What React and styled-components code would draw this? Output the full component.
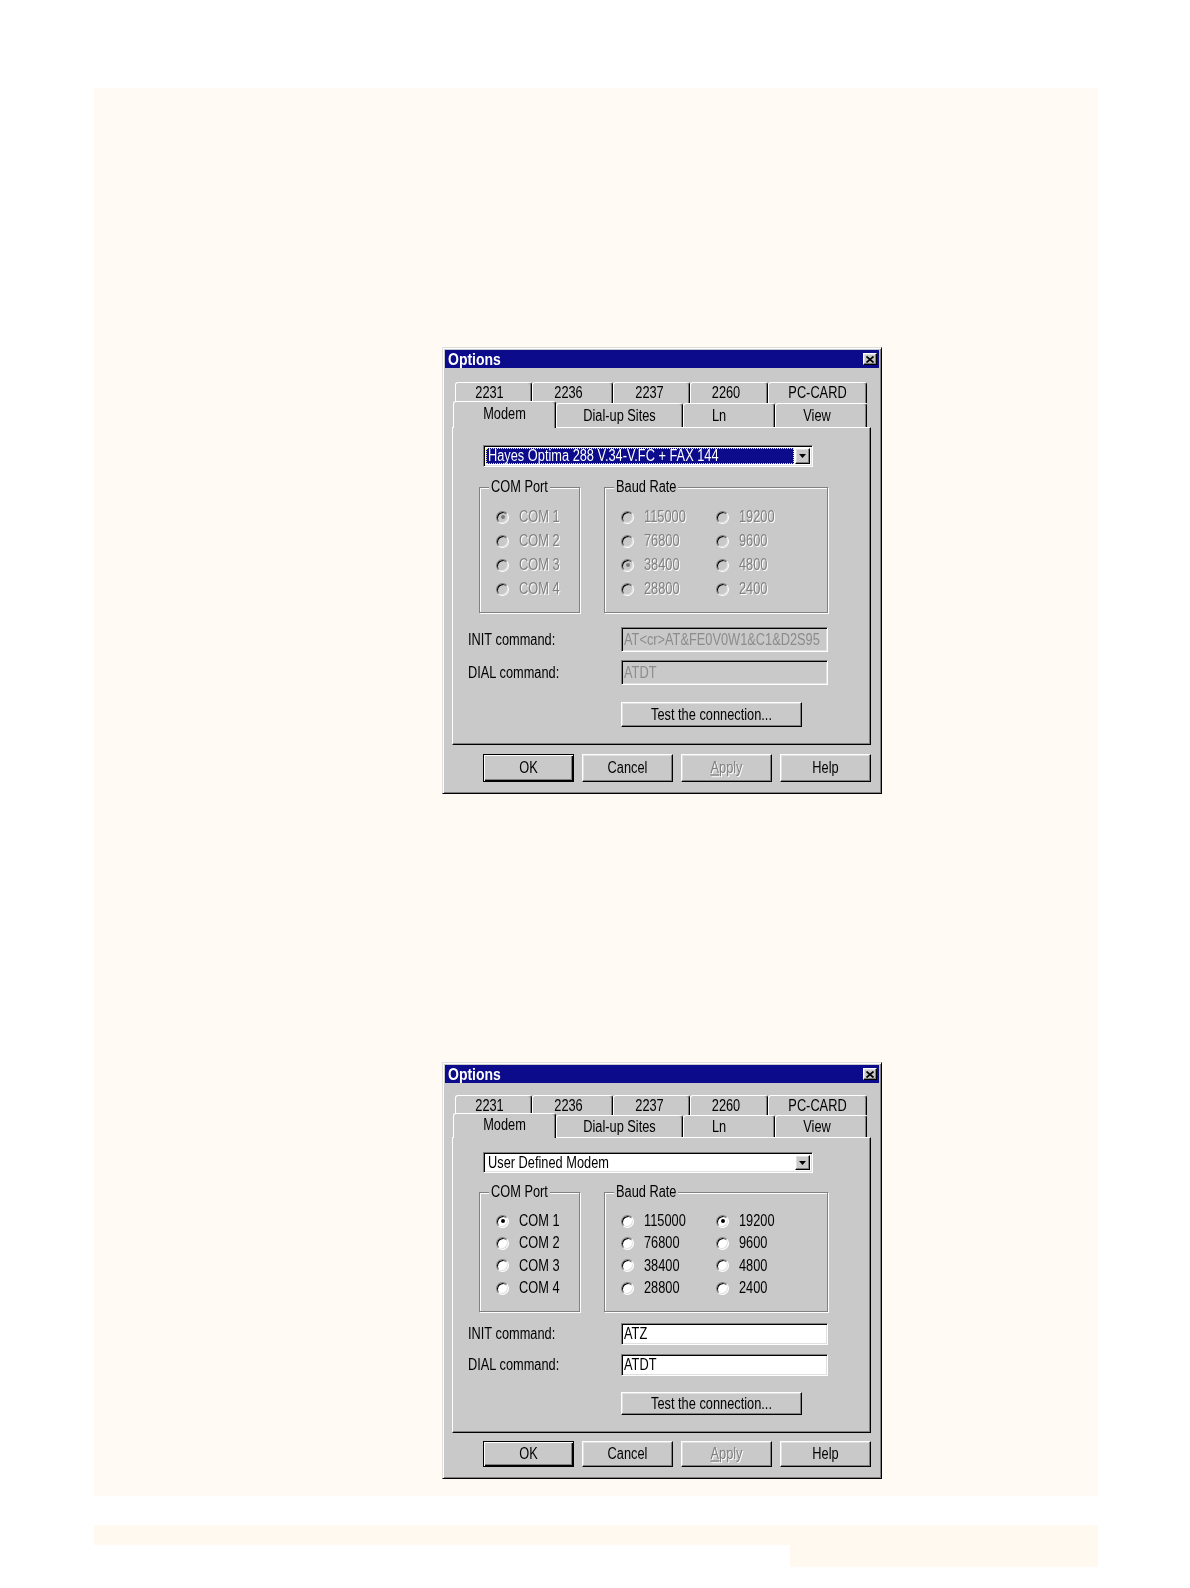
import React from 'react'
import styled, { createGlobalStyle } from 'styled-components'

const FACE = '#c9c9c9'
const NAVY = '#0b0b8c'
const FONT = "'Liberation Sans', Arial, sans-serif"

const GlobalStyle = createGlobalStyle`
  html, body {
    margin: 0;
    padding: 0;
    background: #fff;
  }
  body {
    font-family: ${FONT};
  }
`

// spacing of the two screenshots (the second one is squeezed a little)
const TALL = {
  titleGap: 14, row1: 21, row2: 24,
  comboTop: 17, comboH: 22,
  groupTop: 13, radioPadTop: 11, radioRow: 24, radioPadBottom: 11,
  fieldTop: 14, fieldH: 25, fieldGap: 8,
  testTop: 17, testH: 25, panelBottom: 17,
  btnTop: 9, btnH: 28, bottomPad: 11,
}

const SHORT = {
  titleGap: 12, row1: 20, row2: 22,
  comboTop: 14, comboH: 21,
  groupTop: 12, radioPadTop: 11, radioRow: 22.3, radioPadBottom: 12,
  fieldTop: 11, fieldH: 22, fieldGap: 9,
  testTop: 16, testH: 23, panelBottom: 17,
  btnTop: 8, btnH: 26, bottomPad: 11,
}

const raised = `
  border: 1px solid;
  border-color: #fff #000 #000 #fff;
  box-shadow: inset -1px -1px 0 #808080, inset 1px 1px 0 #dfdfdf;
`

const sunken = `
  border: 1px solid;
  border-color: #808080 #fff #fff #808080;
  box-shadow: inset 1px 1px 0 #000, inset -1px -1px 0 #dfdfdf;
`

const disabledText = `
  color: #808080;
  text-shadow: 1px 1px 0 #fff;
`

// page
const Page = styled.div`
  width: 1190px;
  padding-top: 88px;
  padding-bottom: 20px;
`

const Sheet = styled.div`
  margin-left: 94px;
  width: 1004px;
  box-sizing: border-box;
  padding: 259px 0 17px 348px;
  background: #fffaf3;
  display: flex;
  flex-direction: column;
  align-items: flex-start;
  gap: 268px;
`

const Strip = styled.div`
  margin-top: ${p => p.$top}px;
  margin-left: ${p => p.$left}px;
  width: ${p => p.$width}px;
  height: ${p => p.$h}px;
  background: #fff9f0;
`

// text is stretched vertically in the scanned screenshots
const Txt = styled.span`
  display: inline-block;
  transform: scaleY(${p => p.$sy || 1.28});
  white-space: pre;
`

// window
const Window = styled.div`
  width: 440px;
  box-sizing: border-box;
  background: ${FACE};
  border: 1px solid;
  border-color: #dfdfdf #000 #000 #dfdfdf;
  box-shadow: inset 1px 1px 0 #fff, inset -1px -1px 0 #808080;
  padding: 2px 2px ${p => p.$m.bottomPad}px;
  font-family: ${FONT};
  font-size: 12.8px;
  line-height: 14px;
  color: #000;
`

const TitleBar = styled.div`
  height: 18px;
  background: ${NAVY};
  display: flex;
  align-items: center;
  justify-content: space-between;
  padding: 0 2px 0 3px;
`

const TitleText = styled.span`
  color: #fff;
  font-weight: bold;
  font-size: 14px;
`

const CloseButton = styled.div`
  width: 14px;
  height: 12px;
  box-sizing: border-box;
  background: ${FACE};
  ${raised}
  display: flex;
  align-items: center;
  justify-content: center;
`

const Body = styled.div`
  padding: ${p => p.$m.titleGap}px 8px 0 7px;
`

const TabRow = styled.div`
  display: flex;
  align-items: flex-end;
  height: ${p => p.$h}px;
  padding-left: ${p => p.$inset}px;
  position: relative;
  z-index: ${p => p.$z};
`

const Tab = styled.div`
  width: ${p => p.$w}px;
  height: ${p => (p.$selected ? p.$h + 3 : p.$h)}px;
  margin-bottom: ${p => (p.$selected ? -1 : 0)}px;
  box-sizing: border-box;
  flex-shrink: 0;
  background: ${FACE};
  border-top: 1px solid #fff;
  border-left: 1px solid #fff;
  border-right: 1px solid #000;
  box-shadow: inset -1px 0 0 #808080;
  border-radius: 3px 3px 0 0;
  display: flex;
  align-items: center;
  justify-content: center;
  padding-bottom: ${p => (p.$selected ? 3 : 0)}px;
  padding-right: ${p => p.$pad || 0}px;
  position: relative;
  z-index: ${p => (p.$selected ? 2 : 1)};
`

const Panel = styled.div`
  position: relative;
  z-index: 1;
  ${raised}
  box-shadow: inset -1px -1px 0 #808080;
  padding: 0 0 ${p => p.$m.panelBottom}px;
`

const Combo = styled.div`
  margin: ${p => p.$m.comboTop}px 0 0 30px;
  width: 330px;
  height: ${p => p.$m.comboH}px;
  box-sizing: border-box;
  background: #fff;
  ${sunken}
  padding: 2px;
  display: flex;
`

const ComboValue = styled.div`
  flex: 1;
  display: flex;
  align-items: center;
  padding-left: 2px;
  margin-right: 1px;
  background: ${p => (p.$selected ? NAVY : 'transparent')};
  color: ${p => (p.$selected ? '#fff' : '#000')};
  outline: ${p => (p.$selected ? '1px dotted #e8e8a0' : 'none')};
  outline-offset: -1px;
`

const DropButton = styled.div`
  width: 15px;
  box-sizing: border-box;
  background: ${FACE};
  ${raised}
  display: flex;
  align-items: center;
  justify-content: center;
`

const GroupRow = styled.div`
  display: flex;
  gap: 24px;
  margin: ${p => p.$m.groupTop}px 0 0 26px;
`

const Group = styled.fieldset`
  width: ${p => p.$w}px;
  box-sizing: border-box;
  margin: 0;
  padding: 0;
  min-width: 0;
  border: 1px solid #808080;
  box-shadow: inset 1px 1px 0 #fff, 1px 1px 0 #fff;
`

const Legend = styled.legend`
  margin-left: 9px;
  padding: 0 2px;
  line-height: 14px;
  background: ${FACE};
`

const RadioGrid = styled.div`
  display: grid;
  grid-auto-flow: column;
  grid-template-rows: repeat(4, ${p => p.$m.radioRow}px);
  grid-template-columns: ${p => p.$cols};
  padding: ${p => p.$m.radioPadTop}px 0 ${p => p.$m.radioPadBottom}px 16px;
`

const RadioItem = styled.div`
  display: flex;
  align-items: center;
  ${p => (p.$disabled ? disabledText : 'color: #000;')}
`

const RadioMark = styled.span`
  width: 13px;
  height: 13px;
  box-sizing: border-box;
  flex-shrink: 0;
  margin-right: 10px;
  border-radius: 50%;
  border: 1px solid;
  border-color: #808080 #fff #fff #808080;
  box-shadow: inset 1px 1px 0 #000, inset -1px -1px 0 #dfdfdf;
  background: ${p => (p.$disabled ? FACE : '#fff')};
  display: flex;
  align-items: center;
  justify-content: center;

  &::after {
    content: '';
    width: 4px;
    height: 4px;
    border-radius: 50%;
    background: ${p => (p.$checked ? (p.$disabled ? '#7a7a7a' : '#000') : 'transparent')};
  }
`

const FieldRow = styled.div`
  display: flex;
  align-items: center;
  margin: ${p => p.$top}px 0 0 15px;
`

const FieldLabel = styled.div`
  width: 153px;
`

const TextBox = styled.div`
  width: 207px;
  height: ${p => p.$h}px;
  box-sizing: border-box;
  ${sunken}
  background: ${p => (p.$disabled ? FACE : '#fff')};
  color: ${p => (p.$disabled ? '#8c8c8c' : '#000')};
  padding-left: 2px;
  display: flex;
  align-items: center;
  overflow: hidden;
`

const PushButton = styled.div`
  width: ${p => p.$w}px;
  height: ${p => p.$h}px;
  box-sizing: border-box;
  background: ${FACE};
  ${p =>
    p.$default
      ? `border: 1px solid #000; box-shadow: inset 1px 1px 0 #fff, inset -1px -1px 0 #000, inset -2px -2px 0 #808080;`
      : raised}
  ${p => (p.$disabled ? disabledText : 'color: #000;')}
  display: flex;
  align-items: center;
  justify-content: center;
  flex-shrink: 0;
`

const TestButton = styled(PushButton)`
  margin: ${p => p.$top}px 0 0 168px;
`

const ButtonRow = styled.div`
  display: flex;
  justify-content: flex-end;
  gap: 8px;
  margin-top: ${p => p.$top}px;
`

const Accel = styled.span`
  text-decoration: underline;
`

const CloseGlyph = () => (
  <svg width="8" height="7" viewBox="0 0 8 7">
    <path d="M0.5 0.5 L7.5 6.5 M7.5 0.5 L0.5 6.5" stroke="#000" strokeWidth="1.7" />
  </svg>
)

const DownArrow = () => (
  <svg width="7" height="4" viewBox="0 0 7 4">
    <path d="M0 0 H7 L3.5 4 Z" fill="#000" />
  </svg>
)

const topTabs = [
  { label: '2231', w: 77, pad: 8 },
  { label: '2236', w: 81, pad: 8 },
  { label: '2237', w: 77, pad: 4 },
  { label: '2260', w: 78, pad: 6 },
  { label: 'PC-CARD', w: 99, pad: 0 },
]

const frontTabs = [
  { label: 'Modem', w: 103, selected: true, pad: 0 },
  { label: 'Dial-up Sites', w: 127, pad: 0 },
  { label: 'Ln', w: 92, pad: 20 },
  { label: 'View', w: 92, pad: 8 },
]

const comPorts = ['COM 1', 'COM 2', 'COM 3', 'COM 4']
const bauds = ['115000', '76800', '38400', '28800', '19200', '9600', '4800', '2400']

const OptionsDialog = ({ m, modem, highlighted, locked, com, baud, init, dial }) => (
  <Window $m={m}>
    <TitleBar>
      <TitleText><Txt $sy={1.2}>Options</Txt></TitleText>
      <CloseButton><CloseGlyph /></CloseButton>
    </TitleBar>
    <Body $m={m}>
      <TabRow $h={m.row1} $inset={3} $z={1}>
        {topTabs.map(t => (
          <Tab key={t.label} $w={t.w} $h={m.row1} $pad={t.pad}><Txt>{t.label}</Txt></Tab>
        ))}
      </TabRow>
      <TabRow $h={m.row2} $inset={1} $z={2}>
        {frontTabs.map(t => (
          <Tab key={t.label} $w={t.w} $h={m.row2} $pad={t.pad} $selected={t.selected}>
            <Txt>{t.label}</Txt>
          </Tab>
        ))}
      </TabRow>
      <Panel $m={m}>
        <Combo $m={m}>
          <ComboValue $selected={highlighted}><Txt>{modem}</Txt></ComboValue>
          <DropButton><DownArrow /></DropButton>
        </Combo>
        <GroupRow $m={m}>
          <Group $w={101}>
            <Legend><Txt>COM Port</Txt></Legend>
            <RadioGrid $m={m} $cols="auto">
              {comPorts.map(c => (
                <RadioItem key={c} $disabled={locked}>
                  <RadioMark $disabled={locked} $checked={c === com} />
                  <Txt>{c}</Txt>
                </RadioItem>
              ))}
            </RadioGrid>
          </Group>
          <Group $w={224}>
            <Legend><Txt>Baud Rate</Txt></Legend>
            <RadioGrid $m={m} $cols="95px auto">
              {bauds.map(b => (
                <RadioItem key={b} $disabled={locked}>
                  <RadioMark $disabled={locked} $checked={b === baud} />
                  <Txt>{b}</Txt>
                </RadioItem>
              ))}
            </RadioGrid>
          </Group>
        </GroupRow>
        <FieldRow $top={m.fieldTop}>
          <FieldLabel><Txt>INIT command:</Txt></FieldLabel>
          <TextBox $h={m.fieldH} $disabled={locked}><Txt>{init}</Txt></TextBox>
        </FieldRow>
        <FieldRow $top={m.fieldGap}>
          <FieldLabel><Txt>DIAL command:</Txt></FieldLabel>
          <TextBox $h={m.fieldH} $disabled={locked}><Txt>{dial}</Txt></TextBox>
        </FieldRow>
        <TestButton $top={m.testTop} $w={181} $h={m.testH}><Txt>Test the connection...</Txt></TestButton>
      </Panel>
      <ButtonRow $top={m.btnTop}>
        <PushButton $w={91} $h={m.btnH} $default><Txt>OK</Txt></PushButton>
        <PushButton $w={91} $h={m.btnH}><Txt>Cancel</Txt></PushButton>
        <PushButton $w={91} $h={m.btnH} $disabled><Txt><Accel>A</Accel>pply</Txt></PushButton>
        <PushButton $w={91} $h={m.btnH}><Txt>Help</Txt></PushButton>
      </ButtonRow>
    </Body>
  </Window>
)

export default function App() {
  return (
    <Page>
      <GlobalStyle />
      <Sheet>
        <OptionsDialog
          m={TALL}
          modem="Hayes Optima 288 V.34-V.FC + FAX 144"
          highlighted
          locked
          com="COM 1"
          baud="38400"
          init="AT<cr>AT&FE0V0W1&C1&D2S95"
          dial="ATDT"
        />
        <OptionsDialog
          m={SHORT}
          modem="User Defined Modem"
          com="COM 1"
          baud="19200"
          init="ATZ"
          dial="ATDT"
        />
      </Sheet>
      <Strip $top={29} $left={94} $width={1004} $h={20} />
      <Strip $top={0} $left={790} $width={308} $h={22} />
    </Page>
  )
}
